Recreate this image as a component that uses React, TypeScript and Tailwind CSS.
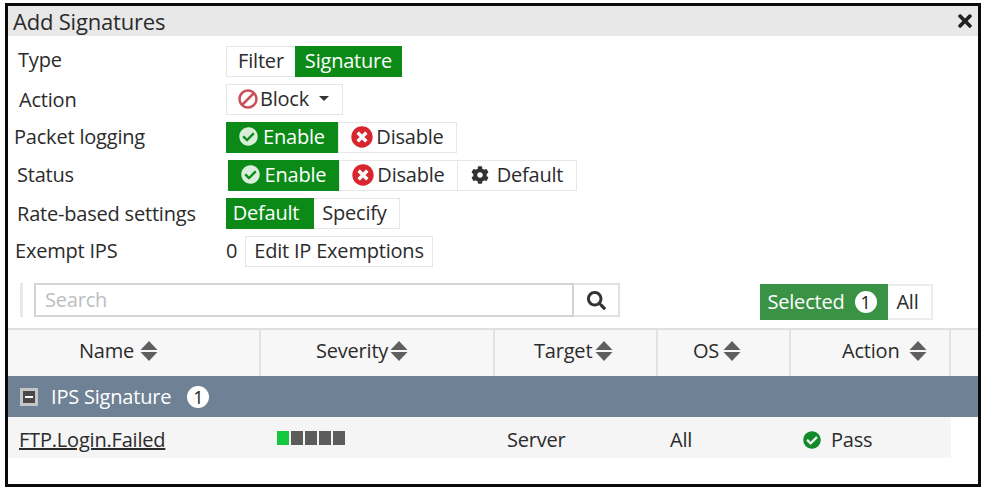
import React from "react";
import { FaBan, FaCheckCircle, FaCog, FaSearch, FaTimes, FaTimesCircle } from "react-icons/fa";

const SortIcon = () => (
    <svg width="18" height="22" viewBox="0 0 18 22" className="shrink-0">
        <path d="M9 1 L17.5 10 L0.5 10 Z" fill="#5f5f5f" />
        <path d="M9 21 L17.5 12 L0.5 12 Z" fill="#5f5f5f" />
    </svg>
);

const CountBadge = () => (
    <span className="flex h-[22px] w-[22px] items-center justify-center rounded-full bg-white text-[18px] leading-none text-[#222]">
        1
    </span>
);

const formRow = "flex h-[31px] items-center";
const greenBtn = "flex h-[31px] items-center justify-center bg-[#0b8a17] pb-[2px] text-white";
const whiteBtn = "flex h-[31px] items-center justify-center border border-[#e6e6e6] bg-white pb-[2px]";

const columns = [
    { label: "Name", className: "w-[253px] pl-[71px] gap-[6px]" },
    { label: "Severity", className: "w-[234px] pl-[55px] gap-[2px]" },
    { label: "Target", className: "w-[163px] pl-[39px] gap-[3px]" },
    { label: "OS", className: "w-[133px] pl-[35px] gap-[4px]" },
    { label: "Action", className: "w-[160px] pl-[51px] gap-[9px]" },
];

const severityLevels = ["bg-[#15c93f]", "bg-[#5c5c5c]", "bg-[#5c5c5c]", "bg-[#5c5c5c]", "bg-[#5c5c5c]"];

export default function App() {
    return (
        <div className="h-[491px] w-[983px] bg-white pl-[5px] pr-[2px] pt-[3px] font-['Open_Sans','Noto_Sans',sans-serif] text-[20px] tracking-[-0.2px] text-[#2b2b2b]">
            <div className="flex h-[484px] w-[976px] flex-col border-[3px] border-[#0a0a0a] bg-white">
                {/* Title */}
                <div className="flex h-[30px] shrink-0 items-center justify-between bg-[#e8e8e8] pl-[5px] pr-[3px]">
                    <span className="text-[22px] leading-none">Add Signatures</span>
                    <FaTimes size={20} className="text-[#222]" />
                </div>

                {/* Form rows */}
                <div className="mt-[10px] flex flex-col gap-[7px]">
                    <div className={formRow}>
                        <span className="w-[218px] pb-[3px] pl-[10px]">Type</span>
                        <div className={`${whiteBtn} w-[69px] border-r-0`}>Filter</div>
                        <div className={`${greenBtn} w-[107px]`}>Signature</div>
                    </div>
                    <div className={formRow}>
                        <span className="w-[218px] pl-[11px]">Action</span>
                        <div className={`${whiteBtn} w-[117px] gap-[2px] pr-[2px]`}>
                            <FaBan size={20} className="-scale-x-100 text-[#c9505a]" />
                            <span>Block</span>
                            <span className="ml-2 h-0 w-0 border-x-[5px] border-t-[5px] border-x-transparent border-t-[#333]" />
                        </div>
                    </div>
                    <div className={formRow}>
                        <span className="w-[218px] pb-[2px] pl-[6px]">Packet logging</span>
                        <div className={`${greenBtn} w-[112px] gap-[5px]`}>
                            <FaCheckCircle size={19} className="text-[#d8eed8]" />
                            <span>Enable</span>
                        </div>
                        <div className={`${whiteBtn} w-[119px] gap-[3px]`}>
                            <FaTimesCircle size={22} className="text-[#d9262e]" />
                            <span>Disable</span>
                        </div>
                    </div>
                    <div className={formRow}>
                        <span className="w-[220px] pb-[2px] pl-[9px]">Status</span>
                        <div className={`${greenBtn} w-[111px] gap-[5px]`}>
                            <FaCheckCircle size={19} className="text-[#d8eed8]" />
                            <span>Enable</span>
                        </div>
                        <div className={`${whiteBtn} w-[119px] gap-[3px]`}>
                            <FaTimesCircle size={22} className="text-[#d9262e]" />
                            <span>Disable</span>
                        </div>
                        <div className={`${whiteBtn} w-[119px] gap-[8px] border-l-0`}>
                            <FaCog size={18} className="text-[#333]" />
                            <span>Default</span>
                        </div>
                    </div>
                    <div className={formRow}>
                        <span className="w-[218px] pl-[9px]">Rate-based settings</span>
                        <div className={`${greenBtn} w-[88px] pr-[8px]`}>Default</div>
                        <div className={`${whiteBtn} w-[86px] border-l-0 pr-[4px]`}>Specify</div>
                    </div>
                    <div className={formRow}>
                        <span className="w-[218px] pb-[2px] pl-[7px]">Exempt IPS</span>
                        <span className="w-[19px] pb-[2px]">0</span>
                        <div className={`${whiteBtn} w-[188px]`}>Edit IP Exemptions</div>
                    </div>
                </div>

                {/* Search + filter */}
                <div className="ml-[12px] mr-[45px] mt-[16px] flex h-[37px] items-start">
                    <span className="mr-[11px] h-[34px] w-[3px] bg-[#e8e8e8]" />
                    <div className="flex h-[34px] w-[540px] items-center border-2 border-[#d4d4d4] px-[9px] text-[#bdbdbd]">
                        Search
                    </div>
                    <div className="flex h-[34px] w-[46px] items-center justify-center border-2 border-l-0 border-[#e2e2e2]">
                        <FaSearch size={19} className="text-[#333]" />
                    </div>
                    <div className="ml-auto mt-px flex">
                        <div className="flex h-[36px] w-[128px] items-center justify-center gap-[10px] bg-[#3a9345] pr-[4px] text-white">
                            <span>Selected</span>
                            <CountBadge />
                        </div>
                        <div className="flex h-[36px] w-[45px] items-center justify-center border-2 border-l-0 border-[#ececec] pr-[4px]">
                            All
                        </div>
                    </div>
                </div>

                {/* Table */}
                <div className="mt-[8px] flex h-[48px] shrink-0 border-t-2 border-[#e0e0e0] bg-[#f7f7f7]">
                    {columns.map((col) => (
                        <div
                            key={col.label}
                            className={`flex items-center border-r-2 border-[#e2e2e2] pb-1 ${col.className}`}
                        >
                            <span>{col.label}</span>
                            <SortIcon />
                        </div>
                    ))}
                </div>
                <div className="flex h-[41px] shrink-0 items-center gap-[13px] bg-[#6f8195] pl-[12px] text-white">
                    <span className="flex h-[18px] w-[18px] items-center justify-center border-[3px] border-[#c5c5c5] bg-[#4a4a4a]">
                        <span className="h-[2px] w-[8px] bg-white" />
                    </span>
                    <span className="mr-[3px]">IPS Signature</span>
                    <CountBadge />
                </div>
                <div className="flex h-[41px] w-[943px] shrink-0 items-center bg-[#f5f5f5]">
                    <div className="w-[253px] pl-[11px] pt-1 underline">FTP.Login.Failed</div>
                    <div className="flex w-[234px] gap-[2px] pl-[16px]">
                        {severityLevels.map((color, i) => (
                            <span key={i} className={`h-[14px] w-[12px] ${color}`} />
                        ))}
                    </div>
                    <div className="w-[163px] pl-[12px] pt-1">Server</div>
                    <div className="w-[133px] pl-[12px] pt-1">All</div>
                    <div className="flex items-center gap-[10px] pl-[12px] pt-1">
                        <FaCheckCircle size={18} className="text-[#12892a]" />
                        <span>Pass</span>
                    </div>
                </div>
            </div>
        </div>
    );
}
